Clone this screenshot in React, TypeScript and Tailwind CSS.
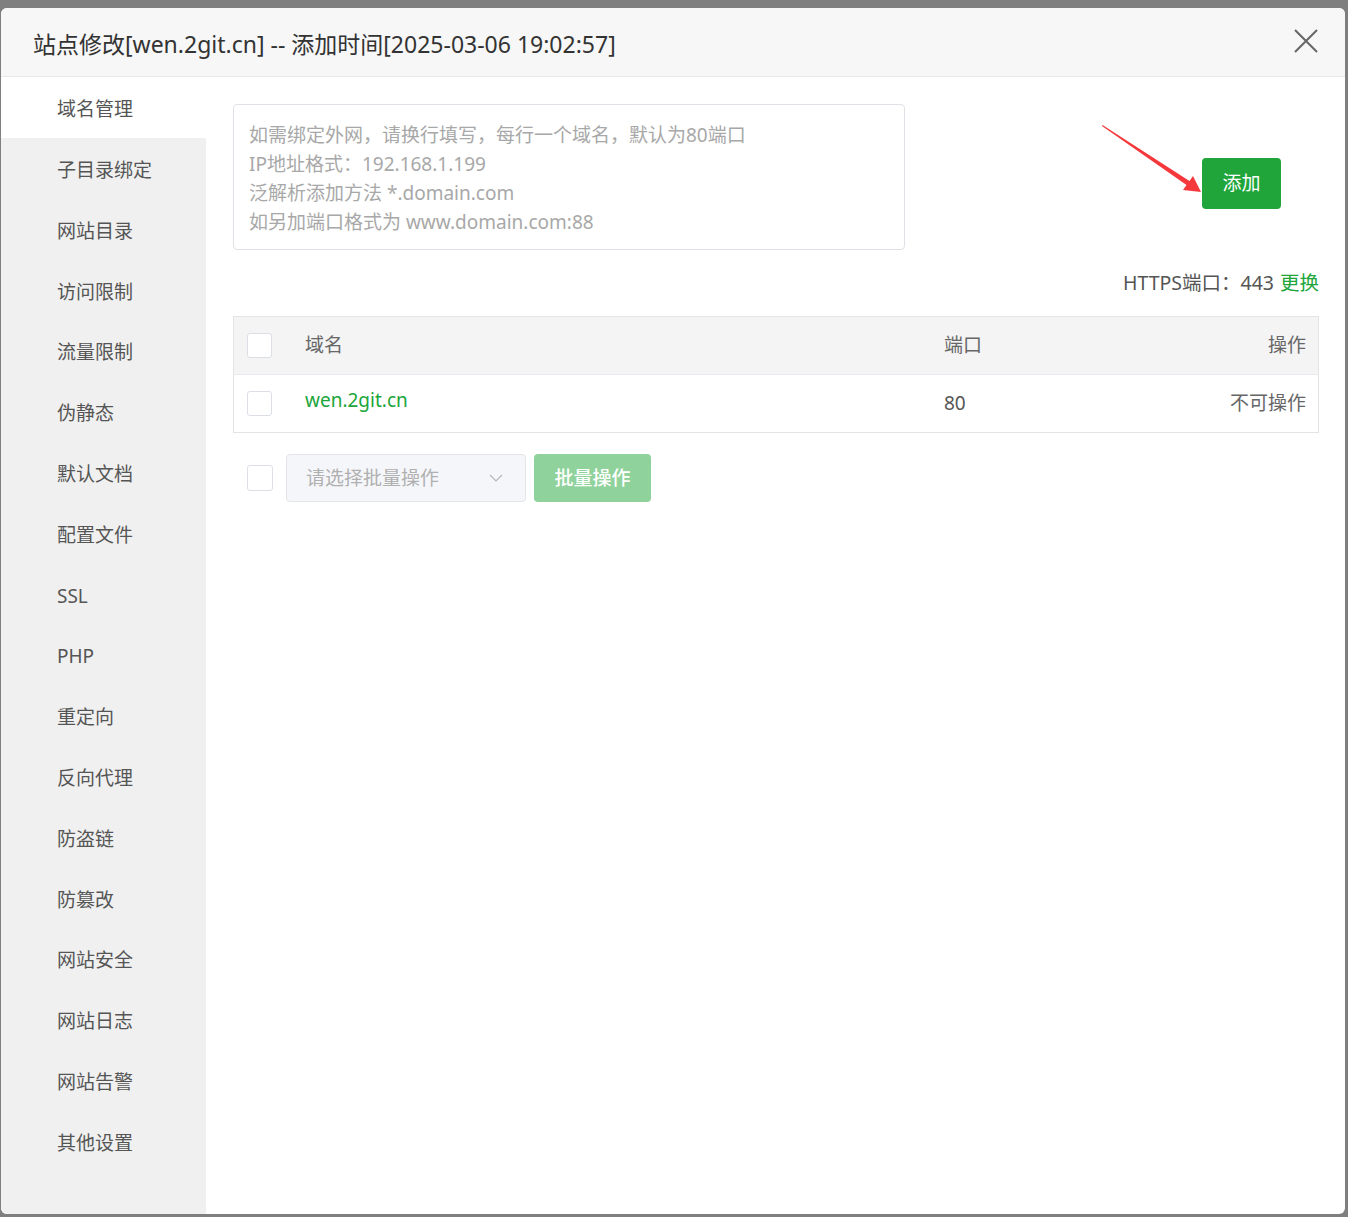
import React from 'react';

const menu = [
  '域名管理', '子目录绑定', '网站目录', '访问限制', '流量限制', '伪静态', '默认文档', '配置文件',
  'SSL', 'PHP', '重定向', '反向代理', '防盗链', '防篡改', '网站安全', '网站日志', '网站告警', '其他设置',
];

const font = { fontFamily: '"Noto Sans", "Noto Sans CJK SC", sans-serif' };

const Checkbox: React.FC<{ big?: boolean }> = ({ big }) => (
  <div className={`${big ? 'w-[26px] h-[26px]' : 'w-[25px] h-[25px]'} bg-white border border-[#dcdfe6] rounded-[3px]`} />
);

export default function App() {
  return (
    <div className="w-full h-[1217px] bg-[#7f7f7f] pt-[8px] pl-[1px] overflow-hidden" style={font}>
      <div className="w-[1344px] h-[1206px] bg-white rounded-[6px] overflow-hidden flex flex-col">
        {/* header */}
        <div className="h-[69px] shrink-0 bg-[#f7f7f7] border-b border-[#e8e8e8] flex items-center justify-between pl-[32px] pr-[27px]">
          <span className="text-[23px] text-[#333] mt-[4px]">站点修改[wen.2git.cn] -- 添加时间[2025-03-06 19:02:57]</span>
          <svg width="24" height="24" viewBox="0 0 24 24" className="mb-[3px]">
            <path d="M1 1 L23 23 M23 1 L1 23" stroke="#666" strokeWidth="2" fill="none" />
          </svg>
        </div>

        <div className="flex flex-1 min-h-0">
          {/* sidebar */}
          <div className="w-[205px] shrink-0 bg-[#f0f0f0] flex flex-col">
            {menu.map((m, i) => (
              <div
                key={m}
                className={`h-[60.8px] shrink-0 flex items-center pl-[56px] pt-[4px] text-[19px] text-[#555] ${i === 0 ? 'bg-white' : ''}`}
              >
                {m}
              </div>
            ))}
          </div>

          {/* content */}
          <div className="flex-1 pt-[27px] pl-[27px] pr-[26px]">
            <div className="relative flex items-start justify-between">
              <div className="w-[672px] h-[146px] border border-[#e0e0e6] rounded-[4px] pl-[15px] pt-[16px] text-[19px] leading-[29px] text-[#a8a8a8]">
                <div>如需绑定外网，请换行填写，每行一个域名，默认为80端口</div>
                <div>IP地址格式：192.168.1.199</div>
                <div>泛解析添加方法 *.domain.com</div>
                <div>如另加端口格式为 www.domain.com:88</div>
              </div>
              <button className="mt-[54px] mr-[38px] w-[79px] h-[51px] bg-[#20a53a] rounded-[4px] text-white text-[19px]">
                添加
              </button>
              <svg
                className="absolute left-[862px] top-[16px]"
                width="115"
                height="80"
                viewBox="0 0 115 80"
              >
                <polygon points="7,6 91.5,65 88,70 106,72 98,56 94.5,61 7.5,5" fill="#f5383b" />
              </svg>
            </div>

            <div className="mt-[20px] h-[26px] flex items-center justify-end text-[19.5px] text-[#555]">
              HTTPS端口：443<span className="ml-[6px] text-[#20a53a]">更换</span>
            </div>

            {/* table */}
            <div className="mt-[20px] border border-[#e4e4e4]">
              <div className="grid grid-cols-[71px_1fr_200px_174px] h-[57px] bg-[#f4f4f4] items-center text-[19px] text-[#666]">
                <div className="pl-[13px]"><Checkbox /></div>
                <div>域名</div>
                <div>端口</div>
                <div className="text-right pr-[12px]">操作</div>
              </div>
              <div className="grid grid-cols-[71px_1fr_200px_174px] h-[58px] border-t border-[#e8eaf0] items-center text-[19px]">
                <div className="pl-[13px]"><Checkbox /></div>
                <div className="text-[#20a53a] -mt-[6px]">wen.2git.cn</div>
                <div className="text-[#555]">80</div>
                <div className="text-right pr-[12px] text-[#666]">不可操作</div>
              </div>
            </div>

            {/* batch */}
            <div className="mt-[21px] flex items-center pl-[14px]">
              <Checkbox big />
              <div className="ml-[13px] w-[240px] h-[48px] bg-[#f5f6fa] border border-[#e3e5ea] rounded-[4px] flex items-center justify-between pl-[19px] pr-[22px] text-[19px] text-[#b0b0b0]">
                <span>请选择批量操作</span>
                <svg width="14" height="9" viewBox="0 0 14 9">
                  <path d="M1 1 L7 7 L13 1" stroke="#b8b8b8" strokeWidth="1.2" fill="none" />
                </svg>
              </div>
              <button className="ml-[8px] w-[117px] h-[48px] bg-[#90d29c] rounded-[4px] text-white text-[19px] font-medium">
                批量操作
              </button>
            </div>
          </div>
        </div>
      </div>
    </div>
  );
}
